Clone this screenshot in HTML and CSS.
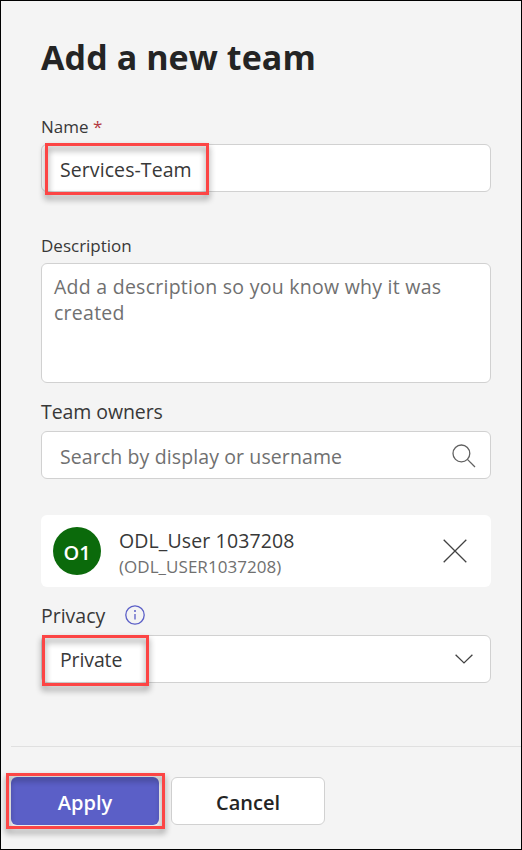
FILE: index.html
```html
<!DOCTYPE html>
<html lang="en">
<head>
<meta charset="utf-8">
<title>Add a new team</title>
<link rel="stylesheet" href="styles.css">
</head>
<body>
<main class="panel">
  <form class="form">
    <h1 class="title">Add a new team</h1>
    <section class="group group-name">
      <div class="label small">Name <span class="required">*</span></div>
      <div class="field"><span class="name-value">Services-Team</span><i class="mark mark-name"></i></div>
    </section>
    <section class="group group-description">
      <div class="label small">Description</div>
      <div class="field area"><span>Add a description so you know why it was<br>created</span></div>
    </section>
    <section class="group group-owners">
      <div class="label owners-label">Team owners</div>
      <div class="field"><span class="muted">Search by display or username</span>
        <svg class="icon search" viewBox="0 0 24 24"><circle cx="9.4" cy="9.4" r="8.4"/><path d="M15.4 15.4 23 23"/></svg>
      </div>
    </section>
    <section class="owner">
      <div class="avatar">O1</div>
      <div class="identity"><span class="user">ODL_User 1037208</span><span class="account">(ODL_USER1037208)</span></div>
      <svg class="icon close" viewBox="0 0 24 24"><path d="M.7.7l22.6 22.6M23.3.7.7 23.3"/></svg>
    </section>
    <section class="group">
      <div class="label">Privacy<svg class="icon info" viewBox="0 0 20 20"><circle cx="10" cy="10" r="9.2"/><path d="M10 9v5.6"/><circle class="dot" cx="10" cy="6" r="1"/></svg></div>
      <div class="field privacy"><span class="privacy-value">Private</span>
        <svg class="icon chevron" viewBox="0 0 18 10"><path d="m.6.7 8.4 8.2L17.4.7"/></svg>
        <i class="mark mark-privacy"></i>
      </div>
    </section>
  </form>
  <footer class="footer">
    <div class="apply-wrap"><button class="button apply">Apply</button><i class="mark mark-apply"></i></div>
    <button class="button cancel">Cancel</button>
  </footer>
</main>
</body>
</html>
```
FILE: styles.css
```css
* { box-sizing: border-box; }
body { margin: 0; font-family: "Open Sans", "Noto Sans", sans-serif; color: #383838; }
.panel { width: 522px; height: 850px; border: 1px solid #000; background: #f4f4f4; }
.form { height: 745px; padding: 32px 30px 0 40px; }
.title { margin: 0; height: 79px; font-size: 34px; line-height: 48px; letter-spacing: .08px; font-weight: 700; color: #242424; white-space: nowrap; }
.group { display: flex; flex-direction: column; }
.group-name { margin-bottom: 39px; }
.group-description { margin-bottom: 16px; }
.group-owners { margin-bottom: 36px; }
.label { display: flex; align-items: center; height: 32px; padding-bottom: 7px; font-size: 19.5px; white-space: pre; }
.owners-label { letter-spacing: -.08px; }
.small { font-size: 17px; padding-bottom: 4px; }
.required { color: #b3393f; }
.field { position: relative; display: flex; align-items: center; height: 48px; padding: 2px 14px 0 18px; border: 1px solid #d1d1d1; border-radius: 6px; background: #fff; font-size: 19.5px; white-space: nowrap; }
.privacy { padding-top: 0; }
.name-value { letter-spacing: .08px; }
.privacy-value { letter-spacing: -.12px; }
.area { height: 120px; align-items: flex-start; padding: 10px 12px; line-height: 26px; letter-spacing: .26px; color: #707070; }
.muted { letter-spacing: .11px; color: #707070; }
.icon { flex: none; fill: none; stroke: #424242; stroke-width: 1.3; }
.search { width: 24px; height: 24px; margin-left: auto; stroke: #616161; }
.owner { display: flex; align-items: center; height: 72px; margin-bottom: 16px; padding: 0 24px 0 12px; border-radius: 6px; background: #fff; }
.avatar { display: flex; align-items: center; justify-content: center; width: 48px; height: 48px; padding-top: 2px; border-radius: 50%; background: #0b6a0b; color: #fff; font-size: 20px; font-weight: 600; }
.identity { display: flex; flex-direction: column; margin-left: 18px; padding-top: 3px; white-space: nowrap; }
.user { font-size: 19.5px; line-height: 27px; letter-spacing: .12px; }
.account { font-size: 17px; line-height: 25px; letter-spacing: .04px; color: #707070; }
.close { width: 24px; height: 24px; margin-left: auto; }
.info { width: 20px; height: 20px; margin: 0 0 2px 20px; stroke: #5b5fc7; }
.info .dot { fill: #5b5fc7; stroke: none; }
.chevron { width: 18px; height: 10px; margin: 0 3px 0 auto; }
.mark { position: absolute; border: 3px solid #fc4545; filter: drop-shadow(0 4px 3px rgba(0, 0, 0, .45)); pointer-events: none; }
.mark-name { left: 3px; top: -2px; width: 164px; height: 52px; }
.mark-privacy { left: 0; top: -1px; width: 107px; height: 51px; }
.mark-apply { left: -5px; top: -4px; width: 159px; height: 56px; }
.footer { display: flex; gap: 12px; margin-left: 10px; padding-top: 30px; border-top: 1px solid #e0e0e0; }
.apply-wrap { position: relative; }
.button { display: flex; align-items: center; justify-content: center; height: 48px; padding: 2px 0 0; border-radius: 6px; font: 600 20px "Open Sans", "Noto Sans", sans-serif; }
.apply { width: 148px; border: 0; background: #5b5fc7; color: #fff; }
.cancel { width: 154px; border: 1px solid #d1d1d1; background: #fff; color: #242424; }
```
